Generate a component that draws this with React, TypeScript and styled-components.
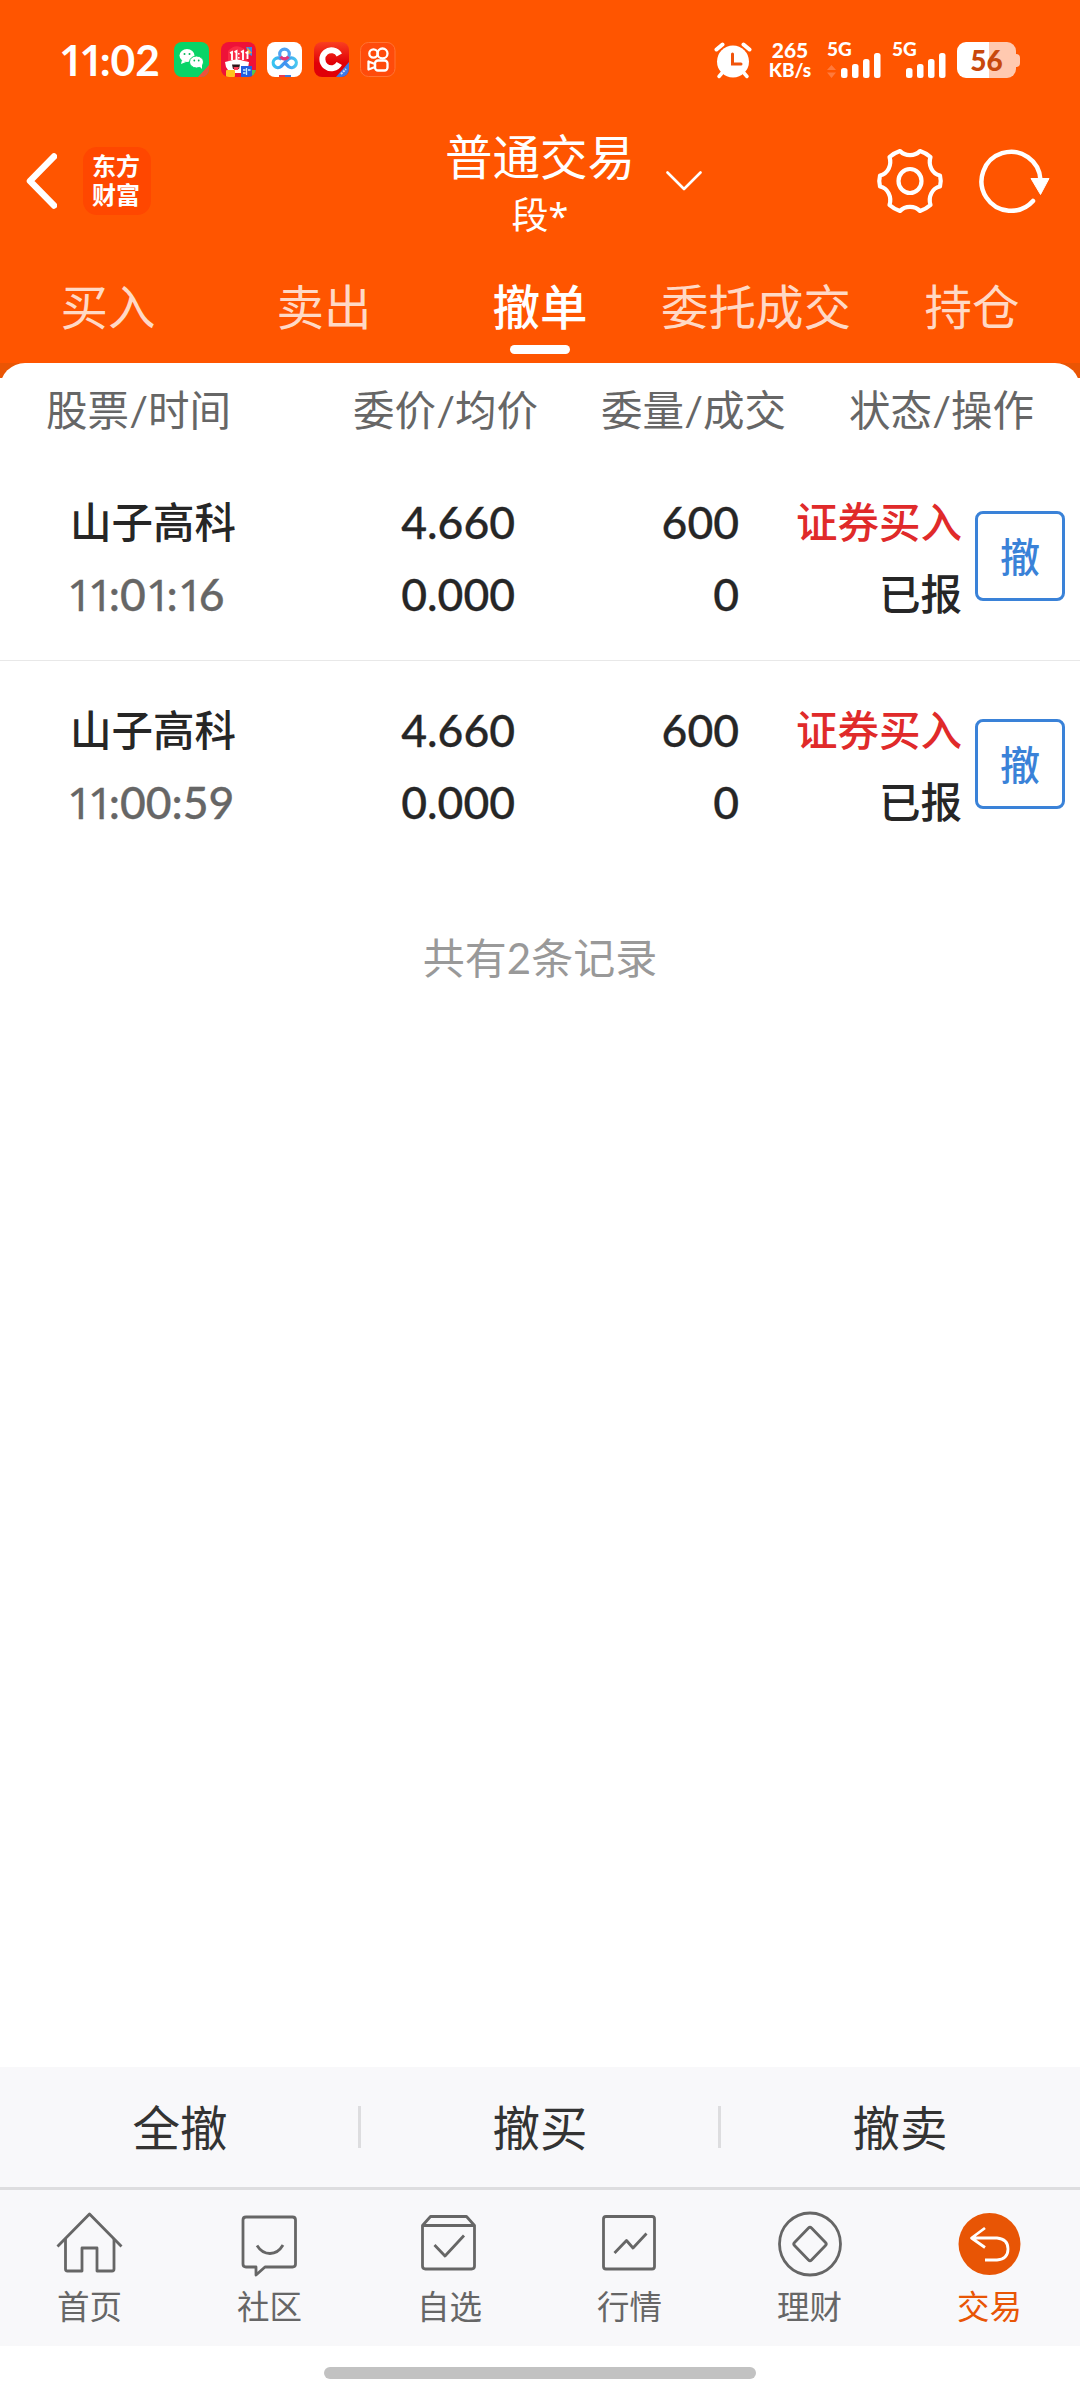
import React from "react";
import styled, { createGlobalStyle } from "styled-components";

const Global = createGlobalStyle`
  body { margin: 0; background: #fff; }
  * { box-sizing: border-box; }
  svg { display: block; flex: none; }
  button { font: inherit; padding: 0; margin: 0; background: none; border: 0; }
`;

const Screen = styled.div`
  width: 1080px;
  height: 2400px;
  display: flex;
  flex-direction: column;
  background: #fff;
  color: #262626;
  font-family: Lato, "Noto Sans CJK SC", sans-serif;
  overflow: hidden;
  white-space: nowrap;
`;

const Header = styled.header`
  height: 363px;
  background: #ff5500;
  color: #fff;
  display: flex;
  flex-direction: column;
`;

const StatusBar = styled.div`
  height: 127px;
  padding: 38px 60px 0 59px;
  display: flex;
  justify-content: space-between;
  align-items: flex-start;
`;

const StatusGroup = styled.div<{ $gap: number }>`
  height: 44px;
  display: flex;
  align-items: center;
  gap: ${(p) => p.$gap}px;
`;

const Clock = styled.div`
  width: 103px;
  font-size: 42.5px;
  line-height: 44px;
  font-weight: 700;
`;

const ClockOne = styled.span`
  font-family: "Noto Sans", sans-serif;
  font-weight: 600;
  letter-spacing: -4px;
`;

const NetSpeed = styled.div`
  width: 44px;
  margin-right: 15px;
  text-align: center;
  font-weight: 900;
  font-size: 21px;
  line-height: 20px;
`;

const SmallUnit = styled.div`
  font-size: 19px;
`;

const Signal = styled.div`
  width: 54px;
  height: 36px;
  margin-right: 11px;
  display: flex;
  flex-direction: column;
`;

const SignalLabel = styled.div`
  height: 13px;
  font-size: 19px;
  line-height: 14px;
  font-weight: 900;
`;

const SignalBars = styled.svg`
  margin-top: -2px;
`;

const Battery = styled.div`
  display: flex;
  align-items: center;
`;

const BatteryBody = styled.div`
  width: 59px;
  height: 36px;
  border-radius: 9px;
  background: linear-gradient(90deg, #fff 0 32.5px, #ffc9b0 32.5px);
  color: #c8480c;
  font-size: 28px;
  line-height: 36px;
  font-weight: 900;
  text-align: center;
`;

const BatteryTip = styled.div`
  width: 4px;
  height: 13px;
  background: #ffc9b0;
  border-radius: 0 4px 4px 0;
`;

const Nav = styled.nav`
  height: 123px;
  display: grid;
  grid-template-columns: 444px 192px 444px;
`;

const NavSide = styled.div<{ $left: number }>`
  height: 108px;
  display: flex;
  align-items: center;
  padding-left: ${(p) => p.$left}px;
`;

const Logo = styled.div`
  width: 68px;
  height: 68px;
  margin-left: 26px;
  padding: 4px 2px 0 0;
  border-radius: 14px;
  background: #ff4700;
  text-align: center;
  font-weight: 700;
  font-size: 24px;
  line-height: 29px;
`;

const TitleBlock = styled.div`
  text-align: center;
`;

const Title = styled.div`
  font-size: 47.5px;
  line-height: 60px;
`;

const SubTitle = styled.div`
  font-size: 37px;
  line-height: 55px;
`;

const Star = styled.span`
  font-family: "Noto Sans", sans-serif;
  font-size: 36px;
`;

const Spacer = styled.div<{ $w: number }>`
  width: ${(p) => p.$w}px;
`;

const Tabs = styled.div`
  height: 113px;
  padding-top: 27px;
  display: grid;
  grid-template-columns: repeat(5, 216px);
`;

const Tab = styled.div<{ $active: boolean }>`
  display: flex;
  flex-direction: column;
  align-items: center;
  font-size: 47.5px;
  line-height: 60px;
  font-weight: ${(p) => (p.$active ? 500 : 400)};
  color: ${(p) => (p.$active ? "#fff" : "#ffd9c6")};
`;

const TabLine = styled.div`
  width: 60px;
  height: 9px;
  margin-top: 8px;
  border-radius: 5px;
  background: #fff;
`;

const SheetTop = styled.div`
  height: 90px;
  background: linear-gradient(180deg, #ea5504 0 15px, #fff 15px);
`;

const HeadRow = styled.div`
  height: 90px;
  padding: 17px 0 0 46px;
  border-radius: 25px 25px 0 0;
  background: #fff;
  display: grid;
  grid-template-columns: 307px 248px 248px 231px;
  color: #666;
  font-size: 41.5px;
  line-height: 60px;
`;

const Slash = styled.span`
  display: inline-block;
  width: 19px;
  text-align: center;
`;

const Row = styled.div<{ $line: boolean }>`
  height: 208px;
  padding: 33px 0 0 70px;
  display: grid;
  grid-template-columns: 301px 144px 224px 223px 103px;
  border-bottom: 1px solid ${(p) => (p.$line ? "#e8e8e8" : "transparent")};
`;

const Cell = styled.div<{ $right?: boolean }>`
  text-align: ${(p) => (p.$right ? "right" : "left")};
`;

const Line = styled.div<{ $color?: string }>`
  height: 72px;
  line-height: 72px;
  font-size: 41.5px;
  font-weight: 500;
  color: ${(p) => p.$color ?? "#262626"};
`;

const NumberText = styled.span<{ $shift?: boolean }>`
  font-size: 44.5px;
  margin-left: ${(p) => (p.$shift ? "-3px" : "0")};
  -webkit-text-stroke: 0.3px currentColor;
`;

const One = styled.span`
  font-family: "Noto Sans", sans-serif;
  font-weight: 400;
  letter-spacing: -4.6px;
`;

const CancelButton = styled.button`
  width: 90px;
  height: 90px;
  margin: 25px 0 0 13px;
  border: 3px solid #3a82d8;
  border-radius: 8px;
  color: #3a82d8;
  font-size: 40px;
  font-weight: 500;
  line-height: 84px;
  padding-top: 1px;
`;

const Total = styled.div`
  height: 176px;
  padding-top: 59px;
  text-align: center;
  color: #999;
  font-size: 42px;
  line-height: 60px;
`;

const Fill = styled.div`
  flex: 1;
`;

const Actions = styled.div`
  height: 123px;
  background: #f8f8fa;
  border-bottom: 3px solid #dddddf;
  display: flex;
  align-items: center;
`;

const Action = styled.button`
  flex: 1;
  color: #333;
  padding-top: 1px;
  font-size: 47.5px;
  line-height: 119px;
`;

const Separator = styled.div`
  width: 3px;
  height: 42px;
  margin: 0 -1px 0 -2px;
  background: #dddddf;
`;

const TabBar = styled.div`
  height: 156px;
  background: #f8f8fa;
  display: grid;
  grid-template-columns: repeat(6, 180px);
`;

const BarItem = styled.div<{ $active: boolean }>`
  padding: 20px 1px 0 0;
  display: flex;
  flex-direction: column;
  align-items: center;
  color: ${(p) => (p.$active ? "#e85505" : "#666")};
  font-size: 32.5px;
  line-height: 40px;
`;

const BarLabel = styled.div`
  margin-top: 9px;
`;

const Gesture = styled.div`
  height: 54px;
  display: flex;
  justify-content: center;
  padding-top: 21px;
`;

const GestureHandle = styled.div`
  width: 432px;
  height: 12px;
  border-radius: 6px;
  background: #c2c2c2;
`;

function Digits({ value, shift }: { value: string; shift?: boolean }) {
  return (
    <NumberText $shift={shift}>
      {value.split("").map((c, i) => (c === "1" ? <One key={i}>1</One> : c))}
    </NumberText>
  );
}

function AppIcons() {
  return (
    <svg width="222" height="36" viewBox="0 0 222 36">
      <defs>
        <clipPath id="r1"><rect x="0" y="0" width="35" height="35" rx="8" /></clipPath>
        <linearGradient id="red" x1="0" y1="0" x2="0" y2="1">
          <stop offset="0" stopColor="#fa3e20" />
          <stop offset=".6" stopColor="#e00008" />
        </linearGradient>
        <linearGradient id="cloud" x1="0" y1="0" x2="1" y2="0">
          <stop offset="0" stopColor="#37c6f0" />
          <stop offset=".5" stopColor="#3f8df0" />
          <stop offset="1" stopColor="#48c8f0" />
        </linearGradient>
      </defs>
      <g clipPath="url(#r1)">
        <rect width="35" height="35" fill="#08d467" />
        <path d="M24 35 35 23v12z" fill="#f0503c" />
        <ellipse cx="13" cy="13.500" rx="7.500" ry="6.500" fill="#fff" />
        <path d="m8 18-1 4 5-2z" fill="#fff" />
        <ellipse cx="22.500" cy="20" rx="7" ry="6" fill="#fff" stroke="#08d467" strokeWidth="1" />
        <path d="m25 24 3 3v-5z" fill="#fff" />
        <g fill="#08b65a">
          <circle cx="10.500" cy="12" r="1" /><circle cx="15.500" cy="12" r="1" />
          <circle cx="20.300" cy="18.500" r=".9" /><circle cx="24.700" cy="18.500" r=".9" />
        </g>
      </g>
      <g transform="translate(47)" clipPath="url(#r1)">
        <rect width="35" height="35" fill="#ee1238" />
        <path d="M25 5h6v9l-4-2z" fill="#3689e8" />
        <path d="M26 5l5 6-4 1z" fill="#ff9c22" />
        <path d="M7 9q8-9 17-1l3 13H7z" fill="#f92b45" />
        <g stroke="#fff" strokeWidth="1.900" fill="none">
          <path d="M9 11l2-1v8M13.500 10l2-1v9M20 10l2-1v9M24.500 11l2-1v7" />
        </g>
        <path d="M17.800 11v1.500M17.800 15v1.500" stroke="#fff" strokeWidth="1.500" />
        <path d="M4 20l4-1q8-3 15 0l5 1-1 6-4 5H9l-4-6z" fill="#fff" />
        <path d="M11 22.500h8l-1 4.500h-6z" fill="#2b161a" />
        <path d="M12.500 25h5.500l-1 3h-4z" fill="#fa405b" />
        <rect x="5" y="28" width="9" height="7" rx="1" fill="#ffc51d" />
        <rect x="20" y="24" width="11" height="11" fill="#245fe0" />
        <path d="M25.500 26v7M22 28h2.500M27 28h2.500M22 31h2.500" stroke="#c8f0ff" strokeWidth="1.300" />
        <path d="M31 28h4v7h-4z" fill="#53c552" />
      </g>
      <g transform="translate(93)" clipPath="url(#r1)">
        <rect width="35" height="35" fill="#fff" />
        <g fill="none" strokeWidth="3.200">
          <path d="M14.500 17.500A4.800 4.800 0 1 0 14 24.500L21 17.500A4.800 4.800 0 1 1 21.500 24.500L17.500 20.500" stroke="url(#cloud)" />
          <circle cx="17.500" cy="12" r="4.800" stroke="#4fa2f2" />
          <path d="M13.500 14.700q4 4.500 8 0" stroke="#e0387c" />
        </g>
        <path d="M12 33h6v2h-6z" fill="#e63b50" /><path d="M18 33h6v2h-6z" fill="#3f78d8" />
      </g>
      <g transform="translate(140)" clipPath="url(#r1)">
        <rect width="35" height="35" fill="url(#red)" />
        <path d="M22 35 35 20v15z" fill="#3d79e6" />
        <path d="m27 32 5-5" stroke="#c9dcff" strokeWidth="2" strokeDasharray="2 1" />
        <path d="M25.300 13A9 9 0 1 0 25.300 21.500" fill="none" stroke="#fff" strokeWidth="6" />
      </g>
      <g transform="translate(186)">
        <rect x=".5" y=".5" width="34.500" height="34" rx="8" fill="#ff4b0b" stroke="#ff7334" />
        <g fill="none" stroke="#fff" strokeWidth="2.300">
          <circle cx="13.500" cy="11.500" r="4.200" /><circle cx="22.500" cy="11.500" r="5" />
          <rect x="15" y="18.500" width="12.500" height="10" rx="3" />
          <path d="m15 22-6.500-2.500v8L15 25z" strokeLinejoin="round" />
        </g>
      </g>
    </svg>
  );
}

function AlarmIcon() {
  return (
    <svg width="38" height="37" viewBox="0 0 38 37">
      <circle cx="19" cy="19.500" r="16" fill="#fff" />
      <g stroke="#fff" strokeLinecap="round" strokeWidth="4" fill="none">
        <path d="M2.500 7.500 8.500 2.500M29.500 2.500l6 5" />
        <path d="m8 31-3 3.500M30 31l3 3.500" strokeWidth="3.500" />
      </g>
      <path d="M18.500 12v10H27" fill="none" stroke="#f0540c" strokeWidth="3" strokeLinecap="round" />
    </svg>
  );
}

function SignalIcon({ arrows }: { arrows: boolean }) {
  return (
    <Signal>
      <SignalLabel>5G</SignalLabel>
      <SignalBars width="54" height="25" viewBox="0 0 54 25">
        {arrows && <path d="M0 17l4.500-5 4.500 5zM0 19.500l4.500 5.500 4.500-5.500z" fill="#ff7a3c" />}
        <g fill="#fff">
          <rect x="14" y="15" width="6.500" height="10" rx="2.500" />
          <rect x="25" y="11" width="6.500" height="14" rx="2.500" />
          <rect x="36" y="6" width="6.500" height="19" rx="2.500" />
          <rect x="47" y="0" width="6.500" height="25" rx="2.500" />
        </g>
      </SignalBars>
    </Signal>
  );
}

function BackIcon() {
  return (
    <svg width="31" height="56" viewBox="0 0 31 56" fill="none" stroke="#fff" strokeWidth="6.500" strokeLinecap="round" strokeLinejoin="round">
      <path d="M28 3.500 4 28l24 24.500" />
    </svg>
  );
}

function ChevronIcon() {
  return (
    <svg width="36" height="20" viewBox="0 0 36 20" fill="none" stroke="#fff" strokeWidth="2.600" strokeLinecap="round" strokeLinejoin="round">
      <path d="m1.500 1.500 16.500 16.500 16.500-16.500" />
    </svg>
  );
}

function GearIcon() {
  return (
    <svg width="68" height="66" viewBox="0 0 68 66" fill="none" stroke="#fff" strokeWidth="4.200" strokeLinejoin="round">
      <path d="M24 3C29 8.500 39 8.500 44 3Q50 5 54.500 9C52 17 56 26 64 27.500Q65.500 33 64 38.500C56 40 52 49 54.500 57Q50 61 44 63C39 57.500 29 57.500 24 63Q18 61 13.500 57C16 49 12 40 4 38.500Q2.500 33 4 27.500C12 26 16 17 13.500 9Q18 5 24 3Z" />
      <ellipse cx="34" cy="33" rx="11.500" ry="12" />
    </svg>
  );
}

function RefreshIcon() {
  return (
    <svg width="72" height="64" viewBox="0 0 72 64" fill="none">
      <path d="M54 52A29.500 29.500 0 1 1 61.500 31" stroke="#fff" strokeWidth="4.500" strokeLinecap="round" />
      <path d="M52 29.500h18L61.500 45.500z" fill="#fff" stroke="#fff" strokeWidth="1" strokeLinejoin="round" />
    </svg>
  );
}

const barIcons: Record<string, React.ReactNode> = {
  首页: (
    <>
      <path d="M1.500 36.500 33.500 4l32 32.500" />
      <path d="M9.500 29v30q0 2 2 2h14.500V38h15v23h15q2 0 2-2V29" />
    </>
  ),
  社区: (
    <>
      <path d="M10 7h46.500q3 0 3 3v44q0 3-3 3H29l-9 8v-8H10q-3 0-3-3V10q0-3 3-3z" />
      <path d="M21 35.500q5 8 13 8t13-8.500" />
    </>
  ),
  自选: (
    <>
      <path d="M6.500 15.500 14.500 6.500h36l8 9V56q0 3-3 3H9.500q-3 0-3-3zM6.500 15.500h52" />
      <path d="m18.500 35 10.500 11 19-20.500" />
    </>
  ),
  行情: (
    <>
      <rect x="7.500" y="6.500" width="51" height="52.500" rx="2.500" />
      <path d="m18.500 43 12-12.500 6.500 7.500L50.500 23.500" />
    </>
  ),
  理财: (
    <>
      <ellipse cx="34" cy="34" rx="30.500" ry="31" />
      <path d="m35.500 18 14 14.500q1.500 1.500 0 3L35.500 50q-1.500 1.500-3 0L18.500 35.500q-1.500-1.500 0-3L32.500 18q1.500-1.500 3 0z" />
    </>
  ),
  交易: (
    <>
      <ellipse cx="33.500" cy="34" rx="31" ry="31" fill="#e85505" stroke="none" />
      <path d="M29 18 15.500 28 29 37.500M16 28h25q11 1 11 11t-11 11H29" stroke="#fff" />
    </>
  ),
};

const tabs = ["买入", "卖出", "撤单", "委托成交", "持仓"];
const columns = [["股票", "时间"], ["委价", "均价"], ["委量", "成交"], ["状态", "操作"]];
const orders = [
  { name: "山子高科", time: "11:01:16", price: "4.660", avg: "0.000", qty: "600", filled: "0" },
  { name: "山子高科", time: "11:00:59", price: "4.660", avg: "0.000", qty: "600", filled: "0" },
];

export default function App() {
  return (
    <Screen>
      <Global />
      <Header>
        <StatusBar>
          <StatusGroup $gap={12}>
            <Clock><ClockOne>11</ClockOne>:02</Clock>
            <AppIcons />
          </StatusGroup>
          <StatusGroup $gap={0}>
            <AlarmIcon />
            <Spacer $w={16} />
            <NetSpeed>265<SmallUnit>KB/s</SmallUnit></NetSpeed>
            <SignalIcon arrows />
            <SignalIcon arrows={false} />
            <Battery><BatteryBody>56</BatteryBody><BatteryTip /></Battery>
          </StatusGroup>
        </StatusBar>
        <Nav>
          <NavSide $left={26}>
            <BackIcon />
            <Logo><div>东方</div><div>财富</div></Logo>
          </NavSide>
          <TitleBlock>
            <Title>普通交易</Title>
            <SubTitle>段<Star>*</Star></SubTitle>
          </TitleBlock>
          <NavSide $left={30}>
            <ChevronIcon />
            <Spacer $w={174} />
            <GearIcon />
            <Spacer $w={35} />
            <RefreshIcon />
          </NavSide>
        </Nav>
        <Tabs>
          {tabs.map((t) => (
            <Tab key={t} $active={t === "撤单"}>
              {t}
              {t === "撤单" && <TabLine />}
            </Tab>
          ))}
        </Tabs>
      </Header>
      <SheetTop>
        <HeadRow>
          {columns.map(([a, b]) => (
            <div key={a}>{a}<Slash>/</Slash>{b}</div>
          ))}
        </HeadRow>
      </SheetTop>
      {orders.map((o, i) => (
        <Row key={o.time} $line={i === 0}>
          <Cell>
            <Line>{o.name}</Line>
            <Line $color="#666"><Digits value={o.time} shift /></Line>
          </Cell>
          <Cell $right>
            <Line><Digits value={o.price} /></Line>
            <Line><Digits value={o.avg} /></Line>
          </Cell>
          <Cell $right>
            <Line><Digits value={o.qty} /></Line>
            <Line><Digits value={o.filled} /></Line>
          </Cell>
          <Cell $right>
            <Line $color="#e02a2a">证券买入</Line>
            <Line>已报</Line>
          </Cell>
          <CancelButton>撤</CancelButton>
        </Row>
      ))}
      <Total>共有2条记录</Total>
      <Fill />
      <Actions>
        <Action>全撤</Action>
        <Separator />
        <Action>撤买</Action>
        <Separator />
        <Action>撤卖</Action>
      </Actions>
      <TabBar>
        {Object.keys(barIcons).map((k) => (
          <BarItem key={k} $active={k === "交易"}>
            <svg width="67" height="68" viewBox="0 0 67 68" fill="none" stroke="currentColor" strokeWidth="2.800" strokeLinejoin="round">
              {barIcons[k]}
            </svg>
            <BarLabel>{k}</BarLabel>
          </BarItem>
        ))}
      </TabBar>
      <Gesture><GestureHandle /></Gesture>
    </Screen>
  );
}
